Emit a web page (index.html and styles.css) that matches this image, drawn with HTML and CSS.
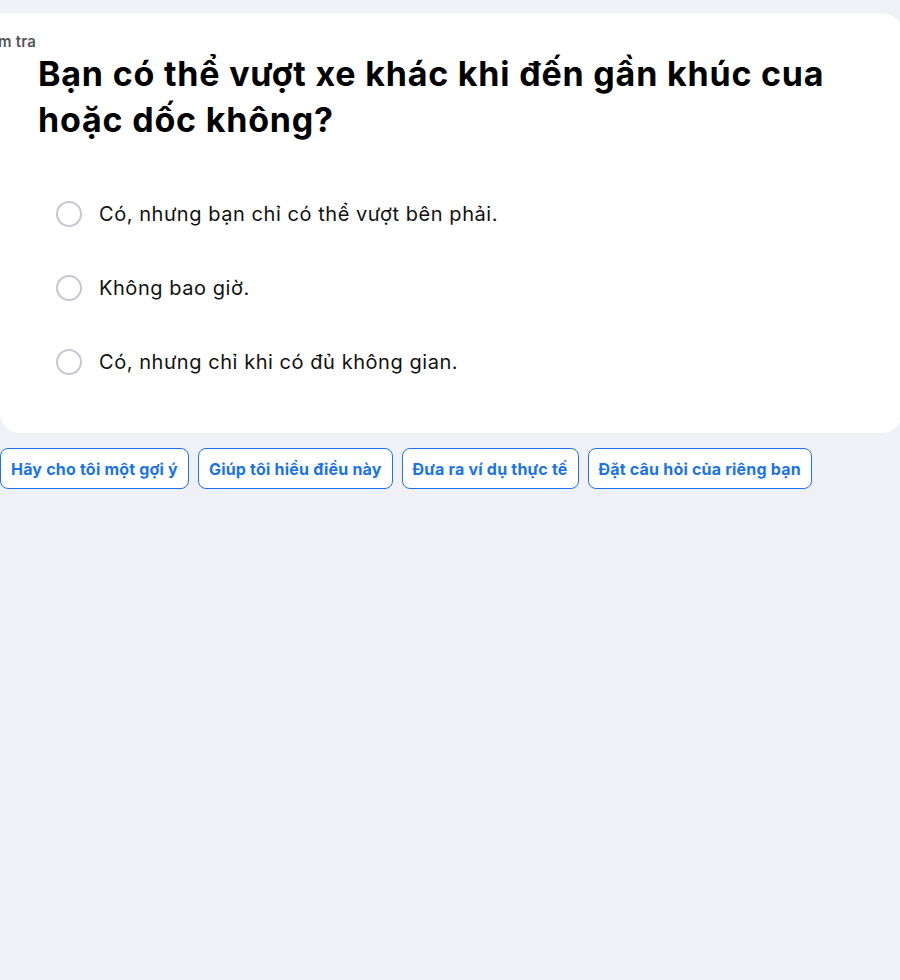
FILE: index.html
```html
<!DOCTYPE html>
<html lang="vi">
<head>
<meta charset="utf-8">
<title>Kiểm tra</title>
<link rel="stylesheet" href="styles.css">
</head>
<body>
<main class="page">
  <section class="card">
    <div class="label">Kiểm tra</div>
    <h1 class="question">Bạn có thể vượt xe khác khi đến gần khúc cua hoặc dốc không?</h1>
    <ul class="options">
      <li class="option"><span class="radio"></span><span class="opt-text">Có, nhưng bạn chỉ có thể vượt bên phải.</span></li>
      <li class="option"><span class="radio"></span><span class="opt-text">Không bao giờ.</span></li>
      <li class="option"><span class="radio"></span><span class="opt-text">Có, nhưng chỉ khi có đủ không gian.</span></li>
    </ul>
  </section>
  <div class="chips">
    <button class="chip">Hãy cho tôi một gợi ý</button>
    <button class="chip">Giúp tôi hiểu điều này</button>
    <button class="chip">Đưa ra ví dụ thực tế</button>
    <button class="chip">Đặt câu hỏi của riêng bạn</button>
  </div>
</main>
</body>
</html>
```
FILE: styles.css
```css
html, body {
  margin: 0;
  padding: 0;
  background: #f0f1f6;
  overflow: hidden;
}
body {
  font-family: "Inter", "Noto Sans", sans-serif;
  color: #111;
}
.page {
  padding-top: 13px;
  width: 902px;
}
.card {
  background: #fff;
  border-radius: 0 20px 20px 20px;
  padding: 19px 0 58px 38px;
}
.label {
  margin-left: -64px;
  font-size: 15px;
  font-weight: 600;
  color: #555;
  line-height: 19px;
  letter-spacing: 0.2px;
}
.question {
  margin: 0;
  font-size: 34px;
  font-weight: 700;
  line-height: 46px;
  letter-spacing: 0.8px;
  color: #000;
  max-width: 820px;
}
.options {
  list-style: none;
  margin: 58px 0 0 0;
  padding: 0 0 0 18px;
  display: flex;
  flex-direction: column;
  gap: 48px;
}
.option {
  display: flex;
  align-items: center;
  gap: 17px;
  height: 26px;
}
.radio {
  width: 22px;
  height: 22px;
  border: 2px solid #c6c6d4;
  border-radius: 50%;
  flex: none;
}
.opt-text {
  font-size: 20px;
  letter-spacing: 0.55px;
  color: #111;
}
.chip {
  font-family: inherit;
  background: #fff;
  border: 1px solid #1a73e8;
  border-radius: 8px;
  color: #1a73e8;
  font-weight: 700;
  font-size: 16px;
  letter-spacing: 0.2px;
  height: 41px;
  padding: 0 10px;
}
.chips {
  display: flex;
  gap: 9px;
  margin-top: 15px;
}
```
